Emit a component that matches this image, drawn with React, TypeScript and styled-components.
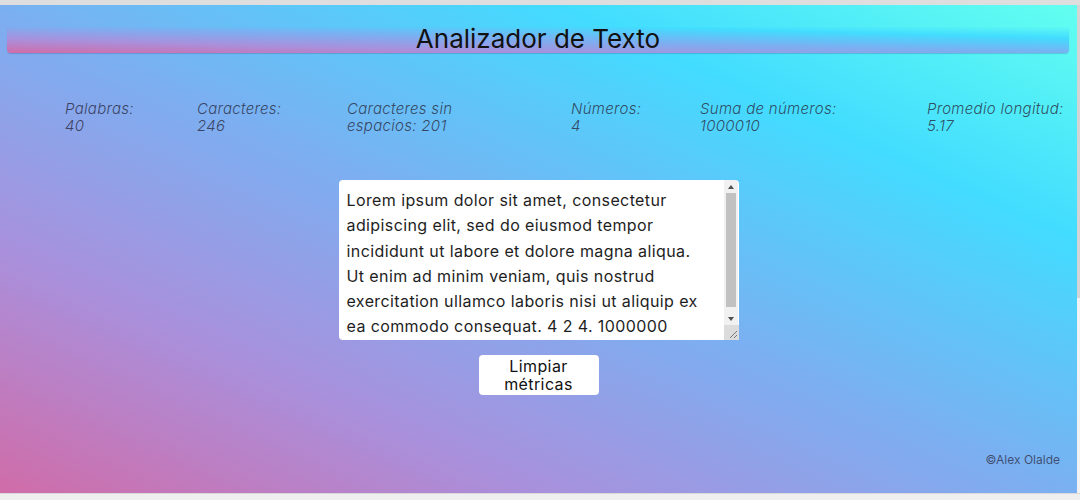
import * as React from 'react';
import styled, { createGlobalStyle } from 'styled-components';

const GlobalStyle = createGlobalStyle`
  html, body { margin: 0; padding: 0; }
  body {
    background: #efefef;
    font-family: Inter, "Open Sans", sans-serif;
  }
`;

const gradient = `linear-gradient(to top right, #d06ca8 0%, #a990dc 25%, #7ab0f2 50%, #42dcff 76%, #62fff0 100%)`;

const grip = `url("data:image/svg+xml,%3Csvg xmlns='http://www.w3.org/2000/svg' width='15' height='15'%3E%3Cpath d='M13 6L6 13M13 10L10 13' stroke='%23777' stroke-width='1'/%3E%3C/svg%3E")`;

const Frame = styled.div`
    height: 500px;
    display: flex;
    flex-direction: column;
    border-top: 5px solid #dedede;
    box-sizing: border-box;
`;

const Viewport = styled.div`
    display: flex;
    height: 488px;
`;

const Page = styled.main`
    flex: 1;
    display: flex;
    flex-direction: column;
    background: ${gradient};
`;

const OuterScroll = styled.div`
    width: 3px;
    background: linear-gradient(to bottom, #d4d4d4 0%, #d4d4d4 60%, #f2f2f2 60%);
`;

const BottomBar = styled.div`
    flex: 1;
    background: #efefef;
    border-top: 1px solid #d9d9d9;
`;

const Header = styled.header`
    margin: 20px 8px 0 7px;
    height: 28px;
    border-radius: 4px;
    background: ${gradient};
    box-shadow: 0 1px 1px rgba(60, 60, 120, 0.25);
    display: flex;
    justify-content: center;
    align-items: center;
`;

const Title = styled.h1`
    margin: 0;
    font-size: 26px;
    font-weight: 400;
    line-height: 28px;
    color: #111;
`;

const Stats = styled.section`
    margin-top: 47px;
    padding-left: 65px;
    display: grid;
    grid-template-columns: 132px 150px 224px 129px 227px 1fr;
`;

const Stat = styled.p<{ $w: number }>`
    margin: 0;
    max-width: ${(p) => p.$w}px;
    font-size: 15px;
    font-style: italic;
    font-weight: 300;
    line-height: 17px;
    letter-spacing: 0.3px;
    color: rgba(40, 40, 60, 0.8);
`;

const EditorBox = styled.div`
    position: relative;
    align-self: center;
    margin-top: 46px;
    width: 400px;
    height: 160px;
`;

const Editor = styled.textarea`
    display: block;
    width: 100%;
    height: 100%;
    box-sizing: border-box;
    padding: 8px 32px 8px 8px;
    border: none;
    border-radius: 4px;
    background: #fff;
    font-family: Inter, "Open Sans", sans-serif;
    font-size: 16px;
    letter-spacing: 0.4px;
    line-height: 25.3px;
    color: #1e1e1e;
    outline: none;

    &::-webkit-scrollbar {
        display: none;
    }
    &::-webkit-resizer {
        background: #dcdcdc ${grip} no-repeat;
    }
`;

/* the browser hides real scrollbars, so the textarea's bar is painted over it */
const ScrollBar = styled.div`
    position: absolute;
    top: 0;
    right: 1px;
    width: 14px;
    height: 145px;
    background: #f1f1f1;
    display: flex;
    flex-direction: column;
    align-items: center;
    pointer-events: none;
    border-top-right-radius: 4px;
`;

const Arrow = styled.div<{ $down?: boolean }>`
    height: 13px;
    width: 100%;
    display: flex;
    align-items: center;
    justify-content: center;
    order: ${(p) => (p.$down ? 3 : 0)};
    margin-top: ${(p) => (p.$down ? 'auto' : '0')};

    &::before {
        content: '';
        border-left: 3.5px solid transparent;
        border-right: 3.5px solid transparent;
        ${(p) => (p.$down ? 'border-top' : 'border-bottom')}: 4px solid #505050;
    }
`;

const Thumb = styled.div`
    order: 1;
    width: 10px;
    height: 114px;
    background: #c1c1c1;
`;

const ClearButton = styled.button`
    align-self: center;
    margin-top: 15px;
    width: 120px;
    height: 40px;
    padding: 0 12px;
    border: none;
    border-radius: 4px;
    background: #fff;
    font-family: Inter, "Open Sans", sans-serif;
    font-size: 16px;
    letter-spacing: 0.4px;
    line-height: 18px;
    color: #111;
    cursor: pointer;
`;

const Footer = styled.footer`
    margin-top: auto;
    padding: 0 17px 26px 0;
    text-align: right;
    font-size: 12px;
    line-height: 15px;
    color: rgba(45, 45, 70, 0.75);
`;

const sample =
  'Lorem ipsum dolor sit amet, consectetur adipiscing elit, sed do eiusmod tempor incididunt ut labore et dolore magna aliqua. Ut enim ad minim veniam, quis nostrud exercitation ullamco laboris nisi ut aliquip ex ea commodo consequat. 4 2 4. 1000000';

const stats = [
  { label: 'Palabras:', value: '40', w: 70 },
  { label: 'Caracteres:', value: '246', w: 88 },
  { label: 'Caracteres sin espacios:', value: '201', w: 122 },
  { label: 'Números:', value: '4', w: 72 },
  { label: 'Suma de números:', value: '1000010', w: 142 },
  { label: 'Promedio longitud:', value: '5.17', w: 142 },
];

const App = () => {
  const [text, setText] = React.useState(sample);

  return (
    <>
      <GlobalStyle />
      <Frame>
        <Viewport>
          <Page>
            <Header>
              <Title>Analizador de Texto</Title>
            </Header>
            <Stats>
              {stats.map((s) => (
                <Stat key={s.label} $w={s.w}>
                  {s.label} {s.value}
                </Stat>
              ))}
            </Stats>
            <EditorBox>
              <Editor value={text} onChange={(e) => setText(e.target.value)} />
              <ScrollBar>
                <Arrow />
                <Thumb />
                <Arrow $down />
              </ScrollBar>
            </EditorBox>
            <ClearButton onClick={() => setText('')}>Limpiar métricas</ClearButton>
            <Footer>©Alex Olalde</Footer>
          </Page>
          <OuterScroll />
        </Viewport>
        <BottomBar />
      </Frame>
    </>
  );
};

export default App;
